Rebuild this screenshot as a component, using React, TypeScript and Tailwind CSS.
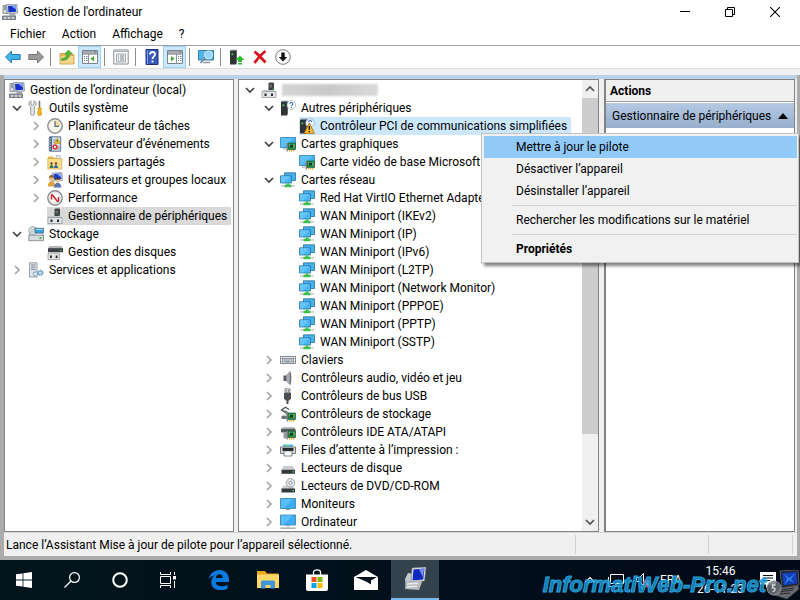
import type { ReactNode } from 'react';
import { clsx } from 'clsx';

type IconProps = { className?: string };

function Svg({ children, className = 'size-4' }: { children: ReactNode; className?: string }) {
  return (
    <svg viewBox="0 0 16 16" fill="none" className={clsx('shrink-0', className)} aria-hidden="true">
      {children}
    </svg>
  );
}

/* ---------- tree icons ---------- */

function ComputerIcon({ className }: IconProps) {
  return (
    <Svg className={className}>
      <path d="M1 1.5h4v8H1z" fill="#d5d8dc" stroke="#7c828a" strokeWidth=".8" />
      <path d="M2 3h2M2 5h2" stroke="#59616b" />
      <path d="M4.5.5 14.8 0l.7 9-10 .8z" fill="#cfd4da" stroke="#888e96" strokeWidth=".8" />
      <path d="m6 2 7.7-.5.4 6.2-7.6.6z" fill="#1531c9" />
      <path d="m9 1.8 4.7-.3.3 4z" fill="#87a8f2" />
      <path d="M8 10h5l1 1.5H7z" fill="#9da3aa" />
      <path d="M.5 12h13v3.5H.5z" fill="#9ba1a7" stroke="#60666c" strokeWidth=".8" />
      <path d="M2 14h2m2 0h2m2 0h2" stroke="#fff" />
    </Svg>
  );
}

function ToolsIcon() {
  return (
    <Svg>
      <path d="M3 .8v3.4l1.5 1 1.5-1V.8c3 1.2 2.7 4.7.4 6v7.4c0 1.6-3.7 1.6-3.7 0V6.8C.2 5.4.2 2 3 .8z" fill="#e3e6e8" stroke="#8b9297" strokeWidth=".9" />
      <path d="M11.5.8v7" stroke="#73797f" strokeWidth="1.6" />
      <path d="M10 8h3.2v1.5l-.6 1 .8 1v3c0 1.3-3.6 1.3-3.6 0v-3l.8-1-.6-1z" fill="#f5b81d" stroke="#c78600" strokeWidth=".7" />
    </Svg>
  );
}

function ClockIcon() {
  return (
    <Svg>
      <circle cx="8" cy="8" r="7.2" fill="#f8f6ea" stroke="#8c9297" strokeWidth="1.5" />
      <path d="M8 8V2.3A5.7 5.7 0 0 1 13.7 8z" fill="#f4d9a0" />
      <path d="M8 3v5.3h4" stroke="#4e6b8c" strokeWidth="1.2" />
    </Svg>
  );
}

function EventIcon() {
  return (
    <Svg>
      <path d="M2.5.8h11.2v14.4H2.5z" fill="#d8e3f2" stroke="#5e7590" />
      <path d="M4 1v14" stroke="#4b6891" strokeWidth="2" />
      <path d="M1 3h3M1 5.5h3M1 8h3M1 10.5h3M1 13h3" stroke="#aab3bd" />
      <path d="M6 4h3M6 6h2M10 11h3M10 13h3" stroke="#7f94b0" />
      <path d="m10.3 2 3 5.5h-6z" fill="#ffd32c" stroke="#b98b00" strokeWidth=".6" />
      <path d="M10.3 4v2.3" stroke="#333" />
      <circle cx="8" cy="11" r="2.7" fill="#d93a3a" />
      <path d="m7 10 2 2m0-2-2 2" stroke="#fff" strokeWidth=".8" />
    </Svg>
  );
}

function SharedFolderIcon() {
  return (
    <Svg>
      <path d="M1 2.5h5L7.2 4H14v3H1z" fill="#e0b552" />
      <path d="M9 1.5h4V5H9z" fill="#dce9f5" stroke="#92a7bb" strokeWidth=".6" />
      <path d="M.8 4.500h14V15H.8z" fill="#f8dc87" stroke="#d5a63c" strokeWidth=".7" />
      <circle cx="4.500" cy="9.500" r="1.200" fill="#6b4a28" />
      <circle cx="9" cy="9.500" r="1.200" fill="#6b4a28" />
      <path d="M2.500 14c0-4 4-4 4 0z" fill="#3b7a49" />
      <path d="M7 14c0-4 4-4 4 0z" fill="#2b6ba8" />
    </Svg>
  );
}

function UsersIcon() {
  return (
    <Svg>
      <path d="m5 1 10-.5.5 8-10 .8z" fill="#d2d7dd" stroke="#8a9097" strokeWidth=".7" />
      <path d="m6.5 2 7.5-.4.4 5.4-7.5.6z" fill="#1c3fce" />
      <path d="m10 2 4-.2.2 3.5z" fill="#8fb0f4" />
      <circle cx="4.5" cy="6.5" r="2.5" fill="#e8ba86" />
      <path d="M2 6c0-4 5-4 5 0-2-.8-3-1-5 0z" fill="#8d5b22" />
      <path d="M.8 14.5c0-7 7.500-7 7.500 0z" fill="#d9a437" />
      <circle cx="10.5" cy="8.5" r="2.3" fill="#f0c79a" />
      <path d="M8 8c.2-3.5 4.800-3.5 5 0-1.500-.7-3.500-.7-5 0z" fill="#4d3522" />
      <path d="M7 15.5c0-6.500 7.300-6.500 7.300 0z" fill="#5577b8" />
    </Svg>
  );
}

function PerformanceIcon() {
  return (
    <Svg>
      <circle cx="8" cy="8" r="7.2" fill="#fff" stroke="#85898c" strokeWidth="1.4" />
      <circle cx="8" cy="8" r="5.3" stroke="#c9cdd0" strokeWidth=".8" />
      <path d="M4.500 9.500V5.500c0-1 1-1 1.500 0l4 5.500c.6.700 1.500.5 1.500-.5V7" stroke="#cf2525" strokeWidth="1.500" />
    </Svg>
  );
}

function DeviceManagerIcon() {
  return (
    <Svg>
      <path d="m7.5 1.500 1-1h4l.5 1V9H7.500z" fill="#3d4144" />
      <path d="M8.500 2.500H11v3H8.500z" fill="#666c70" />
      <path d="M11.500 6.500h1v1h-1z" fill="#42dc4b" />
      <path d="M2.5 8h11l1.500 2H1z" fill="#c6c9cb" />
      <path d="M1 9.5h14v6H1z" fill="#e3e4e5" stroke="#8b8f92" strokeWidth=".7" />
      <path d="M3.500 11.500h2V14h-2zM10 11.500h2V14h-2z" fill="#25292b" />
    </Svg>
  );
}

function StorageIcon() {
  return (
    <Svg>
      <path d="M.8 9.500 2.500 6h11l2 3.500v5.200H.8z" fill="#d8dcdf" stroke="#777e84" strokeWidth=".8" />
      <circle cx="5" cy="4.700" r="4.200" fill="#d9dee3" stroke="#8f979e" strokeWidth=".8" />
      <path d="M5 4.700 8 1.700M5 4.700 2 7" stroke="#a3d5a9" />
      <circle cx="5" cy="4.700" r="1.200" fill="#fff" stroke="#8f979e" strokeWidth=".6" />
      <path d="M7 2.300h8.500V7H7z" fill="#2fa3dd" stroke="#46697c" strokeWidth=".7" />
      <path d="M8 3.500h6.500" stroke="#a3e0fb" />
      <path d="M1 9.500h14.300" stroke="#959ca1" strokeWidth=".8" />
      <path d="M11.500 11h2v2h-2z" fill="#43b84a" />
    </Svg>
  );
}

function DiskManagementIcon() {
  return (
    <Svg>
      <path d="M2.500 2h12L16 4v1H1V4z" fill="#b4b7b9" />
      <path d="M1 4.200h15v4H1z" fill="#3d4246" />
      <path d="M13 6h1.500v1H13z" fill="#42dc4b" />
      <path d="M1 9h11.500v6.500H1z" fill="#e3e4e5" stroke="#8b8f92" strokeWidth=".7" />
      <path d="M3 11.500h1.800V14H3zM8.700 11.500h1.800V14H8.700z" fill="#25292b" />
    </Svg>
  );
}

function ServicesIcon() {
  return (
    <Svg>
      <path d="M1.5.8H9v14.2H1.500z" fill="#e0e5ea" stroke="#8b969f" strokeWidth=".9" />
      <path d="M3 3h4.500M3 5.200h4.500M3 7.400h4.500" stroke="#76828d" />
      <circle cx="7.500" cy="12" r="2.200" fill="#dce8f2" stroke="#7894ad" strokeWidth="1.300" strokeDasharray="1.200 .6" />
      <circle cx="12.500" cy="10.800" r="2.300" fill="#b9d5eb" stroke="#5c89b0" strokeWidth="1.400" strokeDasharray="1.200 .6" />
    </Svg>
  );
}

function Tower() {
  return (
    <>
      <path d="M1 2h6v13.500H1z" fill="#303437" />
      <path d="m1 2 1-1.300h6L7 2z" fill="#777c80" />
      <path d="m7 2 1-1.300v13L7 15.500z" fill="#5c6164" />
      <path d="M2.500 4.500h1.700v1.700H2.500z" fill="#45e150" />
    </>
  );
}

function UnknownDeviceIcon() {
  return (
    <Svg>
      <Tower />
      <circle cx="11.300" cy="5" r="4.300" fill="#fff" stroke="#93a6b6" strokeWidth=".7" />
      <path d="M9.900 4c0-2 3-2 3-.1 0 1.200-1.500 1.200-1.500 2.400M11.400 7v1" stroke="#2e6fb5" strokeWidth="1.100" />
    </Svg>
  );
}

function WarningDeviceIcon() {
  return (
    <Svg>
      <Tower />
      <circle cx="11" cy="5" r="4.300" fill="#eef6fd" stroke="#93a6b6" strokeWidth=".7" />
      <path d="M9.700 4c0-2 3-2 3-.1" stroke="#2e6fb5" strokeWidth="1.100" />
      <path d="m10.300 5 5.200 10.300H5z" fill="#ffbe32" stroke="#a45d00" strokeWidth=".8" strokeLinejoin="round" />
      <path d="M10.300 8v3.800M10.300 13v1.300" stroke="#1d1508" strokeWidth="1.400" />
    </Svg>
  );
}

function Chip() {
  return (
    <>
      <path d="M6.500 7H8v8.500H6.500z" fill="#8b9196" />
      <path d="M8 7h7.500v6.500H8z" fill="#2a8a4b" stroke="#1b5b31" strokeWidth=".7" />
      <path d="M10 9h3v2.500h-3z" fill="#16391f" />
      <path d="M9 9h.8M13.500 9h1M13.500 11h1" stroke="#bfe6b4" />
      <path d="M9 14h1.300v1.500H9zM11 14h1.300v1.500H11zM13 14h1.300v1.500H13z" fill="#eeaa22" />
    </>
  );
}

function DisplayAdapterIcon() {
  return (
    <Svg>
      <path d="M.5 1.500h15v10H.5z" fill="#40b0ee" stroke="#2d7dae" strokeWidth=".8" />
      <path d="M1 2h13L4 11H1z" fill="#5dc0f8" />
      <path d="M3 12.500h3v1H3z" fill="#9aa0a4" />
      <Chip />
    </Svg>
  );
}

function NetworkIcon() {
  return (
    <Svg>
      <path d="M4.500.8h11v7.700h-11z" fill="#46b2ee" stroke="#286f9d" strokeWidth=".8" />
      <path d="M.5 3.800h11V11H.5z" fill="#4bb6f3" stroke="#286f9d" strokeWidth=".8" />
      <path d="M1 4.300h9L4 10.500H1z" fill="#66c5fa" />
      <path d="M1 13h14v1.800H1z" fill="#cfd3d6" />
      <path d="M6.500 11.500h3v1.200h2v2.500h-7v-2.500h2z" fill="#3fc04c" />
    </Svg>
  );
}

function KeyboardIcon() {
  return (
    <Svg>
      <path d="M.5 4.500h15v7H.5z" fill="#dfe1e3" stroke="#84898d" />
      <path d="M2 6.500h12M2 8h12" stroke="#62676b" strokeWidth=".9" strokeDasharray="1.200 .6" />
      <path d="M2 9.800h1.500m1 0h6m1 0H14" stroke="#62676b" strokeWidth=".9" />
    </Svg>
  );
}

function SpeakerIcon() {
  return (
    <Svg>
      <path d="M3.500 5.500h3V11h-3z" fill="#55595d" />
      <path d="M6.500 5.500 10 1.500v13.300L6.500 11z" fill="#a5aaae" stroke="#7a7f84" strokeWidth=".6" />
      <path d="M10 1.500c1.800 1.500 1.800 12 0 13.300z" fill="#696e73" />
    </Svg>
  );
}

function UsbIcon() {
  return (
    <Svg>
      <path d="M5 .8h5v4H5z" fill="#e6e8e9" stroke="#777" strokeWidth=".8" />
      <path d="M6.300 2h.8v1.500h-.8zM8 2h.8v1.500H8z" fill="#333" />
      <path d="M4 4.800h7v5.700l-1.700 2H5.700L4 10.500z" fill="#4c5053" />
      <path d="M7.500 12v4" stroke="#4c5053" strokeWidth="2" />
    </Svg>
  );
}

function StorageControllerIcon() {
  return (
    <Svg>
      <path d="M9 3.500 5.500 1.300 1.500 4l6 4L9 7" stroke="#4b4f52" strokeWidth="1.300" />
      <path d="M4.500 4.500 8 6.500" stroke="#4b4f52" />
      <path d="M1.500 10 3 8.500h4V10z" fill="#c5c8ca" />
      <path d="M1.500 10H7v3H1.500z" fill="#6b7074" />
      <Chip />
    </Svg>
  );
}

function IdeIcon() {
  return (
    <Svg>
      <path d="M3 3h11l1.500 2H1z" fill="#b9bdc0" />
      <path d="M1 4.800h14.500v3.700H1z" fill="#53585b" />
      <path d="M3.500 8.500h4v6h-4z" fill="#94999d" />
      <Chip />
    </Svg>
  );
}

function PrinterIcon() {
  return (
    <Svg>
      <path d="M3 2.500h10v4H3z" fill="#4eb9e6" />
      <path d="M6 2.500h3v3H6z" fill="#76db83" />
      <path d="M.5 5h15v6.500H.5z" fill="#e0e2e3" stroke="#717578" />
      <path d="M2.500 6h11v3h-11z" fill="#272a2c" />
      <path d="M4 9h8v5H4z" fill="#fff" stroke="#606468" strokeWidth=".8" />
    </Svg>
  );
}

function DriveIcon() {
  return (
    <Svg>
      <path d="M3.500 6h9.200l2.300 4H1.500z" fill="#c9ccce" />
      <path d="M1.500 9.800H15v4H1.500z" fill="#35393c" />
      <path d="M12.500 11.300H14v1.200h-1.500z" fill="#43e350" />
    </Svg>
  );
}

function DvdIcon() {
  return (
    <Svg>
      <path d="M3.500 7.500h9.200L15 11H1.500z" fill="#c9ccce" />
      <circle cx="10.500" cy="4.800" r="4.300" fill="#e0e2e3" stroke="#92979b" strokeWidth=".8" />
      <circle cx="10.500" cy="4.800" r="1.500" fill="#fff" stroke="#777" strokeWidth=".7" />
      <path d="M1.500 10.500H15v4H1.500z" fill="#35393c" />
      <path d="M12.500 12H14v1.200h-1.500z" fill="#43e350" />
    </Svg>
  );
}

function MonitorIcon() {
  return (
    <Svg>
      <path d="M.5 2.500h15v10H.5z" fill="#3badf0" stroke="#2e7fae" strokeWidth=".8" />
      <path d="M1 3h12L4 12H1z" fill="#58bdf8" />
      <path d="M6 13h4v1H6z" fill="#91979b" />
    </Svg>
  );
}

function DesktopIcon() {
  return (
    <Svg>
      <path d="M.5 1h15v10H.5z" fill="#3badf0" stroke="#2e7fae" strokeWidth=".8" />
      <path d="M1 1.500h12L4 10.500H1z" fill="#58bdf8" />
      <path d="M6.500 11.500h3v1h-3z" fill="#91979b" />
      <path d="M.5 13.500h15v1.300H.5z" fill="#9aa0a4" />
    </Svg>
  );
}

/* ---------- tree ---------- */

interface TreeItem {
  label: ReactNode;
  icon: () => ReactNode;
  level: number;
  open?: boolean;
  selected?: string;
}

const LEFT_TREE: TreeItem[] = [
  { label: 'Outils système', icon: ToolsIcon, level: 1, open: true },
  { label: 'Planificateur de tâches', icon: ClockIcon, level: 2, open: false },
  { label: 'Observateur d’événements', icon: EventIcon, level: 2, open: false },
  { label: 'Dossiers partagés', icon: SharedFolderIcon, level: 2, open: false },
  { label: 'Utilisateurs et groupes locaux', icon: UsersIcon, level: 2, open: false },
  { label: 'Performance', icon: PerformanceIcon, level: 2, open: false },
  { label: 'Gestionnaire de périphériques', icon: DeviceManagerIcon, level: 2, selected: 'bg-[#d9d9d9]' },
  { label: 'Stockage', icon: StorageIcon, level: 1, open: true },
  { label: 'Gestion des disques', icon: DiskManagementIcon, level: 2 },
  { label: 'Services et applications', icon: ServicesIcon, level: 1, open: false }
];

const MINIPORTS = ['IKEv2', 'IP', 'IPv6', 'L2TP', 'Network Monitor', 'PPPOE', 'PPTP', 'SSTP'];

const DEVICE_TREE: TreeItem[] = [
  {
    label: (
      <span
        aria-label="Nom masqué"
        className="block h-3 w-24 bg-linear-to-r from-[#d4d4d4] via-[#c9c9c9] to-[#dadada] blur-[1px]"
      />
    ),
    icon: DeviceManagerIcon,
    level: 1,
    open: true
  },
  { label: 'Autres périphériques', icon: UnknownDeviceIcon, level: 2, open: true },
  { label: 'Contrôleur PCI de communications simplifiées', icon: WarningDeviceIcon, level: 3, selected: 'bg-[#cce8ff]' },
  { label: 'Cartes graphiques', icon: DisplayAdapterIcon, level: 2, open: true },
  { label: 'Carte vidéo de base Microsoft', icon: DisplayAdapterIcon, level: 3 },
  { label: 'Cartes réseau', icon: NetworkIcon, level: 2, open: true },
  { label: 'Red Hat VirtIO Ethernet Adapter', icon: NetworkIcon, level: 3 },
  ...MINIPORTS.map((name) => ({ label: `WAN Miniport (${name})`, icon: NetworkIcon, level: 3 })),
  { label: 'Claviers', icon: KeyboardIcon, level: 2, open: false },
  { label: 'Contrôleurs audio, vidéo et jeu', icon: SpeakerIcon, level: 2, open: false },
  { label: 'Contrôleurs de bus USB', icon: UsbIcon, level: 2, open: false },
  { label: 'Contrôleurs de stockage', icon: StorageControllerIcon, level: 2, open: false },
  { label: 'Contrôleurs IDE ATA/ATAPI', icon: IdeIcon, level: 2, open: false },
  { label: 'Files d’attente à l’impression :', icon: PrinterIcon, level: 2, open: false },
  { label: 'Lecteurs de disque', icon: DriveIcon, level: 2, open: false },
  { label: 'Lecteurs de DVD/CD-ROM', icon: DvdIcon, level: 2, open: false },
  { label: 'Moniteurs', icon: MonitorIcon, level: 2, open: false },
  { label: 'Ordinateur', icon: DesktopIcon, level: 2, open: false }
];

const INDENT: Record<number, string> = { 1: 'pl-1', 2: 'pl-[23px]', 3: 'pl-[42px]' };

function TreeRow({ item }: { item: TreeItem }) {
  const Icon = item.icon;
  return (
    <li
      role="treeitem"
      aria-expanded={item.open}
      aria-selected={!!item.selected}
      className={clsx('flex h-[18px] items-center', INDENT[item.level])}
    >
      {item.open === undefined ? (
        <span className="w-[18px] shrink-0" />
      ) : (
        <button className="flex w-[18px] shrink-0 items-center pl-0.5" aria-label={item.open ? 'Réduire' : 'Développer'}>
          <svg viewBox="0 0 10 10" fill="none" className="size-2.5">
            {item.open ? (
              <path d="m1 3 4 4 4-4" stroke="#404040" strokeWidth="1.6" />
            ) : (
              <path d="m3 1 4 4-4 4" stroke="#a3a3a3" strokeWidth="1.6" />
            )}
          </svg>
        </button>
      )}
      <span className={clsx('flex h-[18px] items-center gap-[5px] pr-1', item.selected)}>
        <Icon />
        <span className="whitespace-nowrap">{item.label}</span>
      </span>
    </li>
  );
}

/* ---------- toolbar ---------- */

function ToolButton({ label, active, children }: { label: string; active?: boolean; children: ReactNode }) {
  return (
    <button
      aria-label={label}
      className={clsx(
        'flex h-[22px] w-[23px] items-center justify-center',
        active && 'border border-[#99d1ff] bg-[#cce8ff]'
      )}
    >
      {children}
    </button>
  );
}

function Separator() {
  return (
    <span className="flex h-[18px] w-2 pl-[3px]">
      <span className="w-px bg-[#8d8d8d]" />
    </span>
  );
}

function Arrow({ forward }: { forward?: boolean }) {
  return (
    <Svg>
      {forward ? (
        <path d="M15.500 8 9.500 2v3.500H.8v5h8.700V14z" fill="#9b9b9b" stroke="#6b6b6b" strokeWidth=".9" />
      ) : (
        <path d="m.5 8 6-6v3.500h8.700v5H6.500V14z" fill="#42b2ea" stroke="#1c6fa7" strokeWidth=".9" />
      )}
    </Svg>
  );
}

function PanelIcon({ side }: { side: 'left' | 'right' }) {
  const left = side === 'left';
  return (
    <Svg>
      <path d="M.5 1.500h15v13H.5z" fill="#fff" stroke="#7b838a" />
      <path d="M1 2h14v2.500H1z" fill="#a4adb5" />
      <path d="M12 3h2M1 5h14" stroke="#69737c" />
      <path d={left ? 'M6.500 5v9.500' : 'M9.500 5v9.500'} stroke="#8c959d" />
      <path
        d={left ? 'M2 7.500h1m1 0h1.500M2 9.500h1m1 0h1.500M2 11.500h1m1 0h1.500' : 'M11 7.500h1m1 0h1.500M11 9.500h1m1 0h1.500M11 11.500h1m1 0h1.500'}
        stroke="#687f96"
      />
      <path d={left ? 'M12 7v5.500L8.500 9.700z' : 'M4 7v5.500l3.500-2.800z'} fill="#39ad2c" />
    </Svg>
  );
}

function Toolbar() {
  return (
    <div role="toolbar" className="flex h-[23px] items-center border-b border-[#dcdcdc] bg-white pl-px">
      <ToolButton label="Précédent"><Arrow /></ToolButton>
      <ToolButton label="Suivant"><Arrow forward /></ToolButton>
      <Separator />
      <ToolButton label="Monter d’un niveau">
        <Svg>
          <path d="M1 4.500h4l1.500 1.300h8.500V15H1z" fill="#e3b95c" stroke="#c2963c" strokeWidth=".8" />
          <path d="M1.500 7h13v7.500h-13z" fill="#f5d88e" />
          <path d="M2.500 9.500c3.500 0 5-2 5.500-4.500H5.500L9.500 1l4 4H11c-.7 4.500-3.500 6.500-8.500 6.500z" fill="#56b930" stroke="#3a8520" strokeWidth=".5" />
        </Svg>
      </ToolButton>
      <ToolButton label="Arborescence de la console" active><PanelIcon side="left" /></ToolButton>
      <Separator />
      <ToolButton label="Propriétés">
        <Svg>
          <path d="M.8 1h14.400v14H.8z" fill="#fff" stroke="#848b91" />
          <path d="M1.500 2.500h13" stroke="#a7aeb4" />
          <path d="M3.500 5h9v8h-9z" fill="#f2f4f6" stroke="#9ba2a9" />
          <path d="M5 7h1m1 0h4M5 9h1m1 0h4M5 11h1m1 0h4" stroke="#74818e" />
        </Svg>
      </ToolButton>
      <Separator />
      <ToolButton label="Aide">
        <Svg>
          <path d="M2 .5h12v15H2z" fill="#3859bc" stroke="#1d357f" />
          <path d="M3.500 1v14" stroke="#7e9be4" />
          <path d="M6 5.500c0-3.300 5-3.300 5-.3C11 7.500 8.500 7.300 8.500 10M8.500 11.500v2" stroke="#fff" strokeWidth="1.800" />
        </Svg>
      </ToolButton>
      <ToolButton label="Volet Actions" active><PanelIcon side="right" /></ToolButton>
      <Separator />
      <ToolButton label="Rechercher les modifications sur le matériel">
        <Svg>
          <path d="M.5 1.500h15v9.500H.5z" fill="#52b5e9" stroke="#397ea7" />
          <path d="M5 13.500h7" stroke="#90989e" strokeWidth="1.500" />
          <path d="M7.500 8.500 2.500 14" stroke="#7f888f" strokeWidth="1.800" />
          <circle cx="10.500" cy="5.800" r="3.800" fill="#8fd3f7" stroke="#d3e9f5" strokeWidth="1.200" />
        </Svg>
      </ToolButton>
      <Separator />
      <ToolButton label="Mettre à jour le pilote">
        <Svg>
          <Tower />
          <path d="m11 6.500 4.500 4.500H13v2H9v-2H6.500z" fill="#35ba37" />
          <path d="M9 14h4v1.500H9z" fill="#35ba37" />
        </Svg>
      </ToolButton>
      <ToolButton label="Désinstaller l’appareil">
        <Svg>
          <path d="M2.500 2.500c4 3 7 6.500 11 11M13.500 2C9.500 5 6 9 2.500 14" stroke="#dc0f1c" strokeWidth="2.800" />
        </Svg>
      </ToolButton>
      <ToolButton label="Désactiver l’appareil">
        <Svg>
          <circle cx="8" cy="8" r="7.300" fill="#fff" stroke="#777" />
          <path d="M6.300 3.500h3.400V8h2.500L8 12.500 3.800 8h2.500z" fill="#111" />
        </Svg>
      </ToolButton>
    </div>
  );
}

/* ---------- window ---------- */

function TitleBar() {
  const button = 'flex w-[45px] items-center justify-center';
  return (
    <header className="flex h-6 items-stretch bg-white pr-[3px] pl-0.5">
      <div className="flex flex-1 items-center gap-[5px]">
        <ComputerIcon />
        <h1>Gestion de l'ordinateur</h1>
      </div>
      <button aria-label="Réduire" className={button}>
        <svg viewBox="0 0 10 10" className="size-2.5"><path d="M0 4.500h10" stroke="#000" /></svg>
      </button>
      <button aria-label="Restaurer" className={button}>
        <svg viewBox="0 0 10 10" fill="none" className="size-2.5">
          <path d="M.5 2.500h7v7h-7zM2.500 2.500v-2h7v7h-2" stroke="#000" />
        </svg>
      </button>
      <button aria-label="Fermer" className={button}>
        <svg viewBox="0 0 10 10" className="size-2.5"><path d="m0 0 10 10M10 0 0 10" stroke="#000" strokeWidth="1.1" /></svg>
      </button>
    </header>
  );
}

function ScrollBar() {
  return (
    <div className="flex w-4 shrink-0 flex-col items-center bg-[#f0f0f0]">
      <button aria-label="Défiler vers le haut" className="flex h-[18px] w-full items-center justify-center">
        <svg viewBox="0 0 10 10" fill="none" className="size-2.5"><path d="m1 7 4-4 4 4" stroke="#505050" strokeWidth="1.6" /></svg>
      </button>
      <div className="flex w-full flex-1 flex-col">
        <div className="h-[81%] bg-[#cdcdcd]" />
      </div>
      <button aria-label="Défiler vers le bas" className="flex h-[18px] w-full items-center justify-center">
        <svg viewBox="0 0 10 10" fill="none" className="size-2.5"><path d="m1 3 4 4 4-4" stroke="#505050" strokeWidth="1.6" /></svg>
      </button>
    </div>
  );
}

function ContextMenu() {
  const item = 'block w-full h-[22px] pl-8 text-left whitespace-nowrap';
  return (
    <div
      role="menu"
      className="absolute top-[54px] right-[-2px] w-[318px] border border-[#c2c2c2] bg-[#f1f1f1] p-0.5 pr-px shadow-[3px_3px_3px_rgba(0,0,0,0.5)]"
    >
      <button role="menuitem" className={clsx(item, 'bg-[#91c9f7]')}>Mettre à jour le pilote</button>
      <button role="menuitem" className={item}>Désactiver l’appareil</button>
      <button role="menuitem" className={item}>Désinstaller l’appareil</button>
      <hr className="my-[3px] ml-7 border-[#d2d2d2]" />
      <button role="menuitem" className={item}>Rechercher les modifications sur le matériel</button>
      <hr className="my-[3px] ml-7 border-[#d2d2d2]" />
      <button role="menuitem" className={clsx(item, 'font-bold')}>Propriétés</button>
    </div>
  );
}

/* ---------- taskbar ---------- */

function TaskButton({ label, active, children }: { label: string; active?: boolean; children: ReactNode }) {
  return (
    <button
      aria-label={label}
      className={clsx(
        'flex h-10 w-12 items-center justify-center',
        active && 'border-b-2 border-[#76b9ed] bg-[#33424c]'
      )}
    >
      {children}
    </button>
  );
}

function LaptopLogo() {
  return (
    <svg viewBox="0 0 34 30" fill="none" className="h-[30px] w-[34px] shrink-0">
      <path d="m14 1 18-1 1 15-17 3z" fill="#22242b" stroke="#555b66" />
      <path d="m16 3 14.500-1 .7 11.500-13.700 2z" fill="#123fb5" />
      <path d="m18 4 5 4 7-5-5 6 3 4-5-3-5 5 3-6z" fill="#2f7df0" />
      <path d="m14 18 18-3 1 4-12 10-13-4z" fill="#676b70" stroke="#3c3f43" />
      <path d="m15 20 13-2M13 22l14-2M14 24l10-1" stroke="#26282b" />
      <circle cx="8" cy="18" r="7" fill="#6f757a" fillOpacity=".8" stroke="#8d9296" />
      <path d="M9.500 15h-3v3c3-1 4 3 0 3.500" stroke="#dedede" strokeWidth="1.300" />
    </svg>
  );
}

function Taskbar() {
  return (
    <footer className="relative flex h-10 shrink-0 items-center justify-between bg-linear-to-r from-[#02151d] to-[#020a18] text-white">
      <nav aria-label="Barre des tâches" className="flex">
        <TaskButton label="Démarrer">
          <Svg><path d="M0 2.300 6.600 1.400v6.200H0zM7.400 1.300 16 0v7.600H7.400zM0 8.400h6.600v6.200L0 13.700zM7.400 8.400H16V16l-8.600-1.200z" fill="#fff" /></Svg>
        </TaskButton>
        <TaskButton label="Rechercher">
          <Svg>
            <circle cx="10.500" cy="5.500" r="4.900" stroke="#fff" strokeWidth="1.200" />
            <path d="M7 9 .5 15.500" stroke="#fff" strokeWidth="1.300" />
          </Svg>
        </TaskButton>
        <TaskButton label="Cortana">
          <Svg><circle cx="8" cy="8" r="6.800" stroke="#fff" strokeWidth="2" /></Svg>
        </TaskButton>
        <TaskButton label="Affichage des tâches">
          <Svg>
            <path d="M.5 0v2.500h10V0M.5 4.500h10v7H.5zM.5 16v-2.500h10V16M14.500 0v3M14.500 9v7" stroke="#fff" />
            <path d="M13 4h3v3.500h-3z" fill="#fff" />
          </Svg>
        </TaskButton>
        <div className="ml-[3px] flex gap-px">
          <TaskButton label="Microsoft Edge">
            <svg viewBox="0 0 20 20" className="size-5">
              <path
                d="M0 9C.8 3.500 5 0 10.500 0 16.500 0 20 4.300 20 10v2H6.700c.3 3 2.800 4.300 6 4.300 2.200 0 4-.6 5.800-1.600v4c-2 1-4.300 1.500-7 1.500-5.500 0-9.200-3-9.200-8.200 0-3.200 1.600-5.800 4.400-7.200C3.700 5.500 1.600 6.800 0 9zm6.800-1h7c0-2.400-1.100-3.800-3.300-3.800-2.100 0-3.400 1.500-3.700 3.800z"
                fill="#0b7be0"
              />
            </svg>
          </TaskButton>
          <TaskButton label="Explorateur de fichiers">
            <svg viewBox="0 0 22 18" className="h-[18px] w-[22px]">
              <path d="M0 0h8l2 2.500h11.500V17H0z" fill="#e9a91c" />
              <path d="M0 3.500h22V17H0z" fill="#ffd767" />
              <path d="M4 17.500V11q0-1.500 1.500-1.500h11q1.500 0 1.500 1.500v6.500h-4.500V14h-5v3.500z" fill="#3f95db" />
            </svg>
          </TaskButton>
          <TaskButton label="Microsoft Store">
            <svg viewBox="0 0 22 22" fill="none" className="size-[22px]">
              <path d="M7.500 6V3.500c0-3.500 7-3.500 7 0V6" stroke="#fff" strokeWidth="1.300" />
              <path d="M0 5.500h22V20q0 2-2 2H2q-2 0-2-2z" fill="#fff" />
              <path d="M5.500 8h5v5h-5z" fill="#f25022" />
              <path d="M11.500 8h5v5h-5z" fill="#7fba00" />
              <path d="M5.500 14h5v5h-5z" fill="#00a4ef" />
              <path d="M11.500 14h5v5h-5z" fill="#ffb900" />
            </svg>
          </TaskButton>
          <TaskButton label="Courrier">
            <svg viewBox="0 0 24 20" className="h-5 w-6">
              <path d="M0 7 12 0l12 7v13H0z" fill="#fff" />
              <path d="M1.500 7h21.500L17 10.500v4l-4-2.500z" fill="#06131d" />
            </svg>
          </TaskButton>
          <TaskButton label="Gestion de l’ordinateur" active>
            <svg viewBox="0 0 24 24" fill="none" className="size-6">
              <path d="m2 12 3-6 6 1v12l-8 2z" fill="#c4c8cb" />
              <path d="m9 1 14-1-1.500 14L8 15z" fill="#dce0e3" stroke="#777d83" strokeWidth=".6" />
              <path d="m10.500 2.500 11-1-1.300 11-10.700 1z" fill="#1028bf" />
              <path d="m16 2 5-.5-1 9z" fill="#7391ec" />
              <path d="m3 14 13-1 3 2-3 8-14-1z" fill="#b6bbbf" />
              <path d="m4 17 11-.8M4 20l10-.8" stroke="#e8eaeb" strokeWidth="1.500" />
            </svg>
          </TaskButton>
        </div>
      </nav>
      <div className="flex items-center pr-6">
        <button aria-label="Icônes cachées" className="mr-3">
          <svg viewBox="0 0 12 12" fill="none" className="size-3"><path d="m1 8.500 5-5 5 5" stroke="#fff" strokeWidth="1.200" /></svg>
        </button>
        <svg viewBox="0 0 16 16" fill="none" className="mr-3 size-4">
          <path d="M2.500 2.500h13v9h-13zM8 12v2.500M4 14.500h9M.5 5v9.500h3" stroke="#fff" />
        </svg>
        <svg viewBox="0 0 16 16" fill="none" className="mr-2 size-4">
          <path d="M.5 5.500h3l4-4v12l-4-4h-3z" stroke="#fff" />
          <circle cx="11" cy="11.500" r="4" fill="#e53a3a" />
          <path d="m9.500 10 3 3m0-3-3 3" stroke="#fff" />
        </svg>
        <span className="mr-[15px]">FRA</span>
        <time className="mr-4 flex flex-col items-center">
          <span>15:46</span>
          <span>26-11-23</span>
        </time>
        <svg viewBox="0 0 16 16" className="size-4" aria-label="Notifications">
          <path d="M0 0h16v12.500h-7L6 16v-3.500H0z" fill="#fff" />
          <path d="M3 3.500h10M3 6h10M3 8.500h7" stroke="#06111e" />
        </svg>
      </div>
      <div className="pointer-events-none absolute right-0 bottom-0 flex items-center">
        <span className="font-['Liberation_Sans',Arial,sans-serif] text-[22px] font-bold text-[#168fc9]/85 italic [-webkit-text-stroke:1px_#2ba3dc]">
          InformatiWeb-Pro.net
        </span>
        <LaptopLogo />
      </div>
    </footer>
  );
}

export default function App() {
  return (
    <div className="flex min-h-screen flex-col bg-[#ababab] font-['Roboto','Open_Sans',sans-serif] text-[12px] leading-[18px] text-black">
      <TitleBar />
      <nav aria-label="Menus" className="flex h-[22px] items-start border-b border-[#a0a0a0] bg-white pl-0.5">
        {['Fichier', 'Action', 'Affichage', '?'].map((name) => (
          <button key={name} className="h-5 px-2">{name}</button>
        ))}
      </nav>
      <Toolbar />
      <div className="h-1.5 bg-[#f0f0f0]" />
      <main className="relative mr-[3px] ml-1 flex flex-1 flex-col border-t-4 border-[#b9d1ea] bg-[#f0f0f0]">
        <div className="flex flex-1">
          <section aria-label="Console" className="w-[230px] shrink-0 overflow-hidden border border-[#828282] bg-white pt-px">
            <div className="flex h-[18px] items-center gap-[5px] pl-1">
              <ComputerIcon />
              <span className="whitespace-nowrap">Gestion de l’ordinateur (local)</span>
            </div>
            <ul role="tree" className="pl-px">
              {LEFT_TREE.map((item, i) => <TreeRow key={i} item={item} />)}
            </ul>
          </section>
          <section aria-label="Périphériques" className="ml-1 flex min-w-0 flex-1 border border-[#828282] bg-white">
            <ul role="tree" className="min-w-0 flex-1 overflow-hidden pt-px">
              {DEVICE_TREE.map((item, i) => <TreeRow key={i} item={item} />)}
            </ul>
            <ScrollBar />
          </section>
          <aside className="mr-0.5 ml-[5px] w-[191px] shrink-0 border border-l-2 border-[#828282] bg-white">
            <h2 className="h-[22px] border-b border-[#a0a0a0] bg-[#f0f0f0] pl-1 leading-[22px] font-bold">Actions</h2>
            <button className="mt-px flex h-[25px] w-full items-center justify-between bg-linear-to-b from-[#b4c9e2] to-[#97afcd] pr-1.5 pl-1.5 whitespace-nowrap">
              Gestionnaire de périphériques
              <svg viewBox="0 0 10 6" className="h-1.5 w-2.5 shrink-0"><path d="M0 6 5 0l5 6z" fill="#000" /></svg>
            </button>
          </aside>
        </div>
        <div role="status" className="flex h-6 items-stretch border-t border-[#d7d7d7] bg-[#f0f0f0]">
          <span className="flex-1 pl-0.5 leading-6">Lance l’Assistant Mise à jour de pilote pour l’appareil sélectionné.</span>
          <span className="my-0.5 w-[133px] border-l border-[#d0d0d0]" />
          <span className="my-0.5 mr-1 w-[85px] border-x border-[#d0d0d0]" />
        </div>
        <ContextMenu />
      </main>
      <div className="h-1 shrink-0" />
      <Taskbar />
    </div>
  );
}
